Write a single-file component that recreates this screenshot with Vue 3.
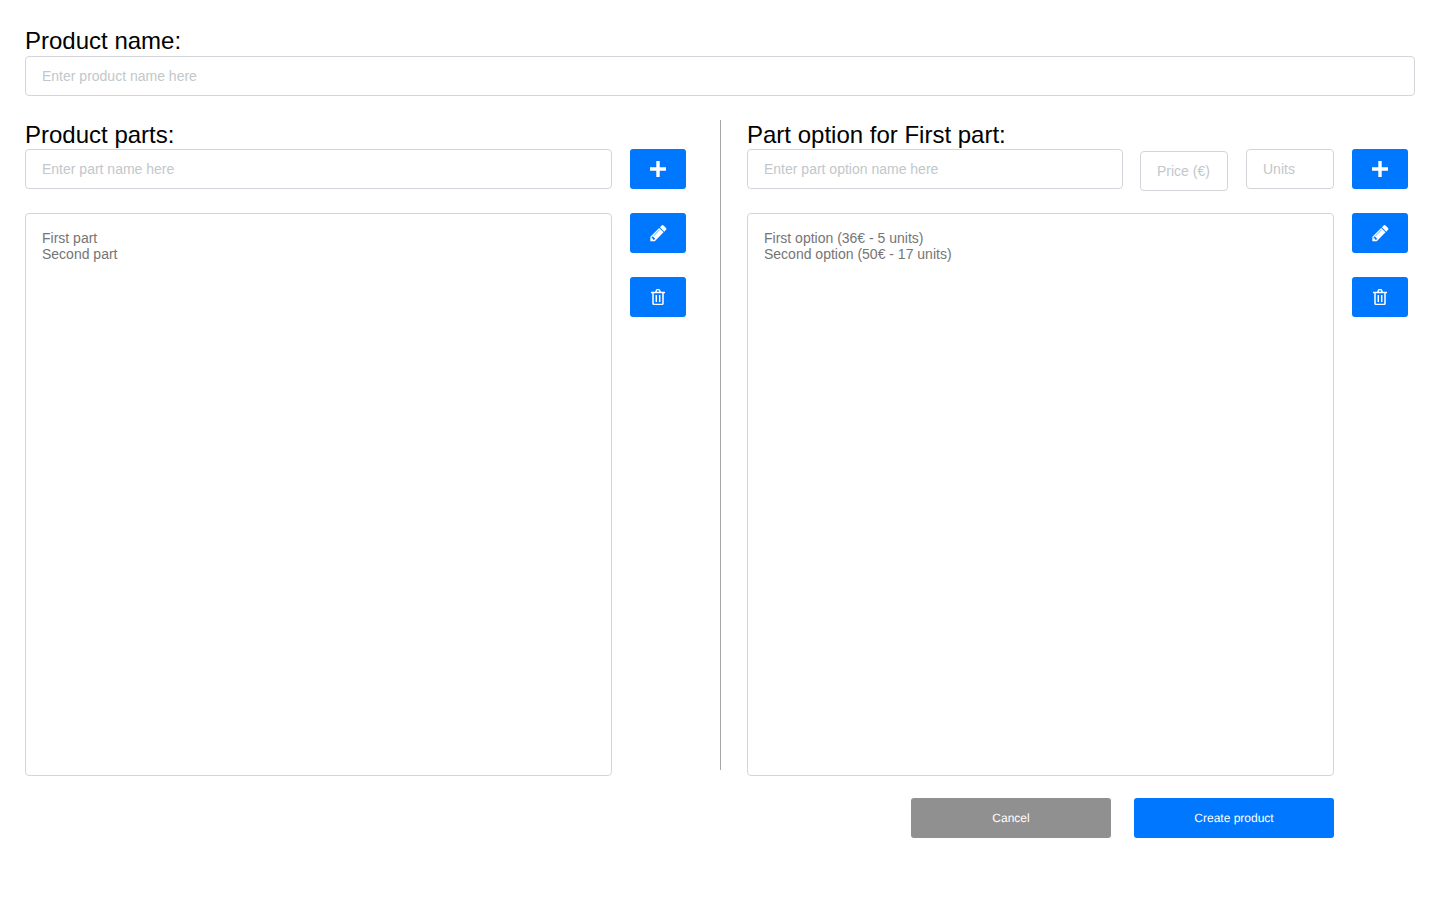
<script setup>
import { ref } from 'vue'

const parts = ref(['First part', 'Second part'])
const options = ref(['First option (36€ - 5 units)', 'Second option (50€ - 17 units)'])

const pencil = 'M491 1536l91-91-235-235-91 91v107h128v128h107zm523-928q0-22-22-22-10 0-17 7l-542 542q-7 7-7 17 0 22 22 22 10 0 17-7l542-542q7-7 7-17zm-54-192l416 416-832 832h-416v-416zm683 96q0 53-37 90l-166 166-416-416 166-165q36-38 90-38 53 0 91 38l235 234q37 39 37 91z'
</script>

<template>
  <div class="page">
    <section class="name-field">
      <label class="title">Product name:</label>
      <input class="field" type="text" placeholder="Enter product name here" />
    </section>

    <div class="columns">
      <section class="col">
        <label class="title">Product parts:</label>
        <div class="row">
          <input class="field grow" type="text" placeholder="Enter part name here" />
          <button class="icon-btn">
            <svg width="16" height="16" viewBox="0 0 16 16"><path d="M6.3 0h3.4v6.3H16v3.4H9.7V16H6.3V9.7H0V6.3h6.3z" fill="#fff" /></svg>
          </button>
        </div>
        <div class="row list-row">
          <div class="list grow">
            <div v-for="p in parts" :key="p">{{ p }}</div>
          </div>
          <div class="actions">
            <button class="icon-btn">
              <svg width="19" height="19" viewBox="0 48 1792 1792"><path :d="pencil" fill="#fff" /></svg>
            </button>
            <button class="icon-btn">
              <svg width="14" height="16" viewBox="0 0 14 16" fill="none" stroke="#fff" stroke-width="1.5"><path d="M0 3.6h14M2 3.6v10.6q0 1.2 1.2 1.2h7.6q1.2 0 1.2-1.2V3.6M4.6 3.6l.9-2.3q.3-.7 1-.7h1q.7 0 1 .7l.9 2.3M5.3 6v7M8.7 6v7" /></svg>
            </button>
          </div>
        </div>
      </section>

      <div class="divider"></div>

      <section class="col">
        <label class="title">Part option for First part:</label>
        <div class="row top-row">
          <input class="field grow" type="text" placeholder="Enter part option name here" />
          <input class="field small price" type="text" placeholder="Price (€)" />
          <input class="field small" type="text" placeholder="Units" />
          <button class="icon-btn">
            <svg width="16" height="16" viewBox="0 0 16 16"><path d="M6.3 0h3.4v6.3H16v3.4H9.7V16H6.3V9.7H0V6.3h6.3z" fill="#fff" /></svg>
          </button>
        </div>
        <div class="row list-row">
          <div class="list grow">
            <div v-for="o in options" :key="o">{{ o }}</div>
          </div>
          <div class="actions">
            <button class="icon-btn">
              <svg width="19" height="19" viewBox="0 48 1792 1792"><path :d="pencil" fill="#fff" /></svg>
            </button>
            <button class="icon-btn">
              <svg width="14" height="16" viewBox="0 0 14 16" fill="none" stroke="#fff" stroke-width="1.5"><path d="M0 3.6h14M2 3.6v10.6q0 1.2 1.2 1.2h7.6q1.2 0 1.2-1.2V3.6M4.6 3.6l.9-2.3q.3-.7 1-.7h1q.7 0 1 .7l.9 2.3M5.3 6v7M8.7 6v7" /></svg>
            </button>
          </div>
        </div>
        <div class="footer">
          <button class="text-btn cancel">Cancel</button>
          <button class="text-btn">Create product</button>
        </div>
      </section>
    </div>
  </div>
</template>

<style>
html, body {
  background: #fff;
}
</style>

<style scoped>
.page {
  box-sizing: border-box;
  height: 900px;
  padding: 27px 25px 0;
  font-family: "Liberation Sans", Arial, sans-serif;
  overflow: hidden;
}

.title {
  display: block;
  height: 28px;
  font-size: 24px;
  line-height: 28px;
  color: #000;
}
.name-field .title {
  margin-bottom: 1px;
}

.field {
  box-sizing: border-box;
  display: block;
  height: 40px;
  padding: 0 16px;
  border: 1px solid #d2d6da;
  border-radius: 4px;
  outline: none;
  background: #fff;
  font-family: inherit;
  font-size: 14px;
  color: #495057;
}
.field::placeholder {
  color: #c2c7cb;
  opacity: 1;
}
.name-field .field {
  width: 100%;
}

.columns {
  display: flex;
  margin-top: 24px;
}

.col {
  width: 661px;
  padding-top: 1px;
}

.divider {
  flex: none;
  width: 1px;
  height: 650px;
  margin: 0 26px 0 34px;
  background: #a6a6a6;
}

.row {
  display: flex;
  gap: 18px;
}
.top-row {
  height: 40px;
  align-items: flex-start;
}
.grow {
  flex: 1;
  min-width: 0;
}
.small {
  flex: none;
  width: 88px;
}
.price {
  margin: 2px 0 0 -1px;
}

.list-row {
  margin-top: 24px;
}
.list {
  box-sizing: border-box;
  height: 563px;
  padding: 16px;
  border: 1px solid #d2d6da;
  border-radius: 4px;
  font-size: 14px;
  line-height: 16px;
  color: #757575;
}

.actions {
  display: flex;
  flex-direction: column;
  gap: 24px;
}

.icon-btn {
  flex: none;
  display: flex;
  align-items: center;
  justify-content: center;
  width: 56px;
  height: 40px;
  padding: 0;
  border: none;
  border-radius: 3px;
  background: #0077ff;
}

.footer {
  display: flex;
  justify-content: flex-end;
  gap: 23px;
  margin: 22px 74px 0 0;
}

.text-btn {
  width: 200px;
  height: 40px;
  padding: 0;
  border: none;
  border-radius: 3px;
  background: #0077ff;
  font-family: inherit;
  font-size: 12px;
  text-rendering: geometricPrecision;
  color: #fff;
}
.cancel {
  background: #909090;
}
</style>
